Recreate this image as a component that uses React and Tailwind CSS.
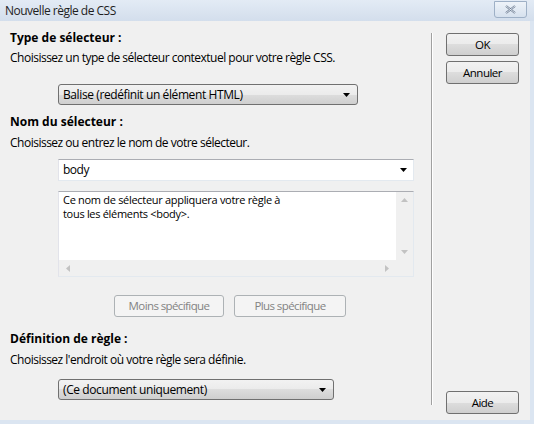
import React from "react";

const font = { fontFamily: '"Open Sans", Lato, sans-serif' };

function Arrow() {
  return (
    <svg width="7" height="4" viewBox="0 0 7 4" className="shrink-0">
      <path d="M0 0H7L3.5 4Z" fill="#000" />
    </svg>
  );
}

function Select({ label, width }) {
  return (
    <div
      className={`${width} h-[21px] flex items-center justify-between pl-[4px] pr-[7px] border border-[#707070] rounded-[3px] bg-[linear-gradient(#f2f2f2_0%,#ebebeb_50%,#dddddd_50%,#cfcfcf_100%)] text-[12px] tracking-[-0.4px] text-black`}
    >
      <span className="leading-none">{label}</span>
      <Arrow />
    </div>
  );
}

function Btn({ children, className = "" }) {
  return (
    <div
      className={`w-[73px] h-[23px] flex items-center justify-center border border-[#707070] rounded-[3px] bg-[linear-gradient(#f2f2f2_0%,#ebebeb_50%,#dddddd_50%,#cfcfcf_100%)] text-[11.5px] tracking-[-0.5px] text-black ${className}`}
    >
      {children}
    </div>
  );
}

function DisBtn({ children, w }) {
  return (
    <div
      className={`${w} h-[22px] flex items-center justify-center border border-[#adb2b5] rounded-[3px] bg-[#f4f4f4] text-[11.5px] tracking-[-0.6px] text-[#838383]`}
    >
      {children}
    </div>
  );
}

export default function App() {
  return (
    <div className="w-[534px] h-[424px] bg-[#dbe5f1] flex flex-col" style={font}>
      {/* Title bar */}
      <div className="h-[21px] flex items-center justify-between pl-[5px] pr-[7px] bg-[linear-gradient(#e3ebf5,#d3deec)]">
        <span className="text-[12px] tracking-[-0.5px] text-[#1e1e1e] leading-none">Nouvelle règle de CSS</span>
        <div className="w-[33px] h-[17px] -mt-[3px] flex items-center justify-center border border-[#9eb0c6] rounded-b-[3px] bg-[linear-gradient(#eef3f9,#d6e1ee)]">
          <svg width="11" height="9" viewBox="0 0 11 9">
            <path d="M1 1L10 8M10 1L1 8" stroke="#6a7a90" strokeWidth="2" fill="none" />
            <path d="M1 1L10 8M10 1L1 8" stroke="#f2f6fb" strokeWidth="0.8" fill="none" />
          </svg>
        </div>
      </div>
      {/* Body */}
      <div className="flex-1 flex mr-[4px] mb-[4px] bg-[#f0f0f0] text-[12px] tracking-[-0.5px] text-black">
        {/* Left column */}
        <div className="w-[431px] flex flex-col pl-[10px] pt-[9px]">
          <div className="h-[16px] leading-[16px] font-bold tracking-normal">Type de sélecteur :</div>
          <div className="mt-[4px] h-[16px] leading-[16px]">
            Choisissez un type de sélecteur contextuel pour votre règle CSS.
          </div>
          <div className="mt-[18px] pl-[48px]">
            <Select label="Balise (redéfinit un élément HTML)" width="w-[300px]" />
          </div>
          <div className="mt-[9px] h-[16px] leading-[16px] font-bold tracking-normal">Nom du sélecteur :</div>
          <div className="mt-[5px] h-[16px] leading-[16px]">
            Choisissez ou entrez le nom de votre sélecteur.
          </div>
          <div className="mt-[8px] ml-[48px] w-[356px] h-[22px] flex items-center justify-between pl-[4px] pr-[6px] bg-white border border-[#e3e9ef] border-t-[#abadb3] border-l-[#e2e3ea]">
            <span className="leading-none">body</span>
            <Arrow />
          </div>
          <div className="mt-[10px] ml-[48px] w-[356px] h-[86px] flex flex-col bg-white border border-[#e3e9ef] border-t-[#abadb3] border-l-[#e2e3ea]">
            <div className="flex-1 flex">
              <div className="flex-1 pl-[4px] pt-[1px] leading-[14px] text-[11px] tracking-[-0.3px]">
                Ce nom de sélecteur appliquera votre règle à<br />tous les éléments &lt;body&gt;.
              </div>
              <div className="w-[17px] bg-[#f0f0f0] flex flex-col items-center justify-between py-[6px]">
                <svg width="7" height="4" viewBox="0 0 7 4"><path d="M0 4H7L3.5 0Z" fill="#c2c2c2" /></svg>
                <svg width="7" height="4" viewBox="0 0 7 4"><path d="M0 0H7L3.5 4Z" fill="#c2c2c2" /></svg>
              </div>
            </div>
            <div className="h-[16px] flex">
              <div className="flex-1 bg-[#f0f0f0] flex items-center justify-between px-[7px]">
                <svg width="4" height="7" viewBox="0 0 4 7"><path d="M4 0V7L0 3.5Z" fill="#c2c2c2" /></svg>
                <svg width="4" height="7" viewBox="0 0 4 7"><path d="M0 0V7L4 3.5Z" fill="#c2c2c2" /></svg>
              </div>
              <div className="w-[17px] bg-[#f0f0f0]" />
            </div>
          </div>
          <div className="mt-[18px] ml-[104px] flex gap-[10px]">
            <DisBtn w="w-[110px]">Moins spécifique</DisBtn>
            <DisBtn w="w-[112px]">Plus spécifique</DisBtn>
          </div>
          <div className="mt-[14px] h-[16px] leading-[16px] font-bold tracking-normal">Définition de règle :</div>
          <div className="mt-[5px] h-[16px] leading-[16px]">
            Choisissez l'endroit où votre règle sera définie.
          </div>
          <div className="mt-[11px] pl-[48px]">
            <Select label="(Ce document uniquement)" width="w-[276px]" />
          </div>
        </div>
        {/* Separator */}
        <div className="mt-[12px] mb-[15px] w-[2px] border-l border-[#a0a0a0] border-r border-r-white" />
        {/* Right column */}
        <div className="flex-1 flex flex-col pl-[13px] pt-[12px] pb-[6px]">
          <Btn>OK</Btn>
          <Btn className="mt-[5px]">Annuler</Btn>
          <div className="flex-1" />
          <Btn>Aide</Btn>
        </div>
      </div>
    </div>
  );
}
